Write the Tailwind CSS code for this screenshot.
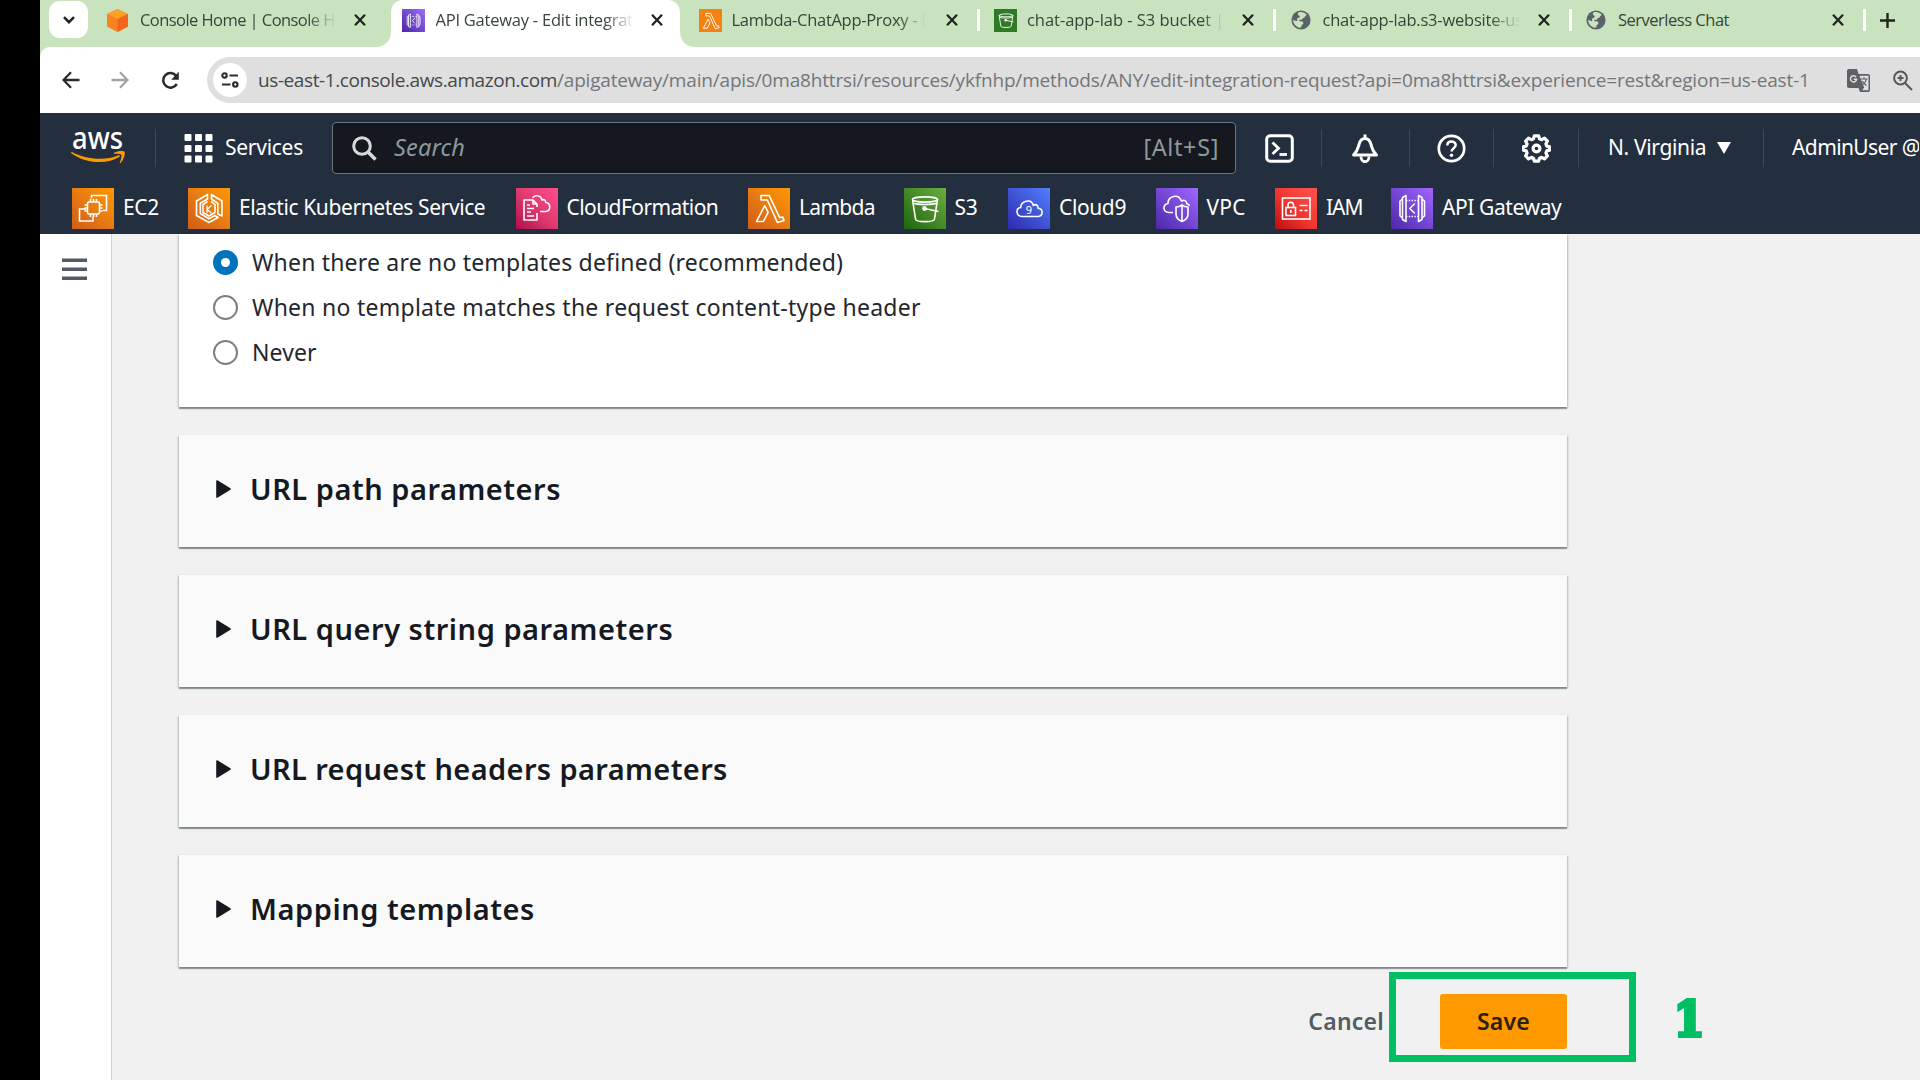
<!DOCTYPE html>
<html lang="en">
<head>
<meta charset="utf-8">
<title>API Gateway - Edit integration request</title>
<script src="https://cdn.jsdelivr.net/npm/@tailwindcss/browser@4"></script>
</head>
<body class="w-[1920px] h-[1080px] overflow-hidden bg-black pl-[40px] font-['Noto_Sans',sans-serif] text-[#16191f]">

<!-- Shared symbols -->
<svg class="hidden">
  <symbol id="x" viewBox="0 0 12 12"><path d="M1 .8l10 10.4M11 .8L1 11.2" stroke="#20261f" stroke-width="2.3" fill="none"/></symbol>
  <symbol id="globe" viewBox="0 0 20 20"><circle cx="10" cy="10" r="9.6" fill="#5c6268"/><path d="M8.3 2.1c2.6-.6 5.6.3 7.3 2.4-.3 1.500-1.400 1.200-1.900 2.400-.6 1.200-2.300.8-2.500 2.100-.2.9-1.500.8-2.400.8-.9.100-.7 1.300.1 1.400 1.400 0 3.300-.1 3.500 1.700.1 1.500-1.900 1.600-2 3.200-.1.900-.5 1.700-1.200 1.700C4.900 17 2.200 13.800 2.100 9.700c1.400.7 2.900 1.300 3.900 1.300.9-.3-.5-1.500.2-2.400.8-1 2.600-.8 2.600-2.200 0-1.200-1.900-.7-2-2.100 0-.9.6-1.900 1.500-2.200z" fill="#c9e3bf"/></symbol>
  <symbol id="lambda" viewBox="0 0 40 40"><path d="M12 7.500h8.200l10.600 22.300 2.800-.9 1.400 3.500-6.600 2.100L18.300 12H12zM15.800 17.500l3.300 6.800L14.400 33.500H7.500z" fill="none" stroke="#fff" stroke-width="1.600" stroke-linejoin="round"/></symbol>
  <symbol id="bucket" viewBox="0 0 40 40"><g fill="none" stroke="#fff" stroke-width="1.600"><ellipse cx="20" cy="11.500" rx="12.500" ry="2.600"/><path d="M7.500 11.500l3 19.500c.3 3.500 18.700 3.500 19 0l3-19.500M8 15c5 2 19 2 24 0"/><path d="M19.500 20.500l14 3"/></g><circle cx="19.500" cy="20.500" r="2.400" fill="#fff"/></symbol>
  <symbol id="apigw" viewBox="0 0 40 40"><g fill="none" stroke="#fff" stroke-width="1.600" stroke-linejoin="round"><path d="M14 7.500l-3.500 2v22l3.500 2zM10.500 11L8 13v15l2.500 2M26.500 7.500l3.500 2v22l-3.500 2zM30 11l2.500 2v15L30 30M22.800 15.500l-5 5 5 5"/><path d="M14 12.500h12.500M14 28.500h12.500" stroke-dasharray="1.400 1.400"/></g></symbol>
</svg>

<div class="flex h-full flex-col overflow-hidden">

  <!-- Browser tab strip -->
  <header class="flex h-[47px] shrink-0 bg-[#c9e3bf] font-['Open_Sans',sans-serif] text-[16.500px] text-[#38433a]">
    <div class="w-[55px] shrink-0 pl-[9px] pt-px">
      <div class="flex h-[37px] w-[39px] items-center justify-center rounded-[11px] bg-white">
        <svg width="12" height="8" viewBox="0 0 12 8"><path d="M1 1.200l5 5 5-5" fill="none" stroke="#222" stroke-width="2.600"/></svg>
      </div>
    </div>

    <div class="flex h-[40px] w-[295.500px] shrink-0 items-center pl-[12px]">
      <svg width="21" height="23" viewBox="0 0 21 23"><path d="M10.500 0L21 5v12.500L10.500 23 0 17.500V5z" fill="#f8821d"/><path d="M10.500 0L21 5l-10.500 5L0 5z" fill="#fba02b"/><path d="M10.500 10L21 5v12.500L10.500 23z" fill="#f1661c"/></svg>
      <span class="ml-[12px] w-[196px] overflow-hidden whitespace-nowrap tracking-[-0.560px] mask-r-from-85% mask-r-to-100%">Console Home | Console H</span>
      <svg class="ml-[18px]" width="12" height="12"><use href="#x"/></svg>
    </div>

    <div class="relative h-[47px] w-[296px] shrink-0">
      <svg class="absolute left-[-16px] top-0" width="326" height="47" viewBox="0 0 326 47"><path d="M0 47c10 0 16-6 16-16V13C16 5 21 0 28 0H293c7 0 12 5 12 13V31c0 10 6 16 16 16z" fill="#fff"/></svg>
      <div class="relative flex h-[40px] items-center pl-[11px]">
        <div class="flex size-[23px] items-center justify-center bg-linear-to-tr from-[#4d27aa] to-[#9b6df5]"><svg width="21" height="23"><use href="#apigw"/></svg></div>
        <span class="ml-[11px] w-[198px] overflow-hidden whitespace-nowrap tracking-[-0.230px] mask-r-from-85% mask-r-to-100%">API Gateway - Edit integrat</span>
        <svg class="ml-[17px]" width="12" height="12"><use href="#x"/></svg>
      </div>
    </div>

    <div class="flex h-[40px] w-[295.500px] shrink-0 items-center pl-[12px]">
      <div class="flex size-[23px] items-center justify-center bg-[#f58210]"><svg width="23" height="23"><use href="#lambda"/></svg></div>
      <span class="ml-[10px] w-[197px] overflow-hidden whitespace-nowrap tracking-[-0.300px] mask-r-from-85% mask-r-to-98%">Lambda-ChatApp-Proxy - L</span>
      <svg class="ml-[17px]" width="12" height="12"><use href="#x"/></svg>
      <div class="ml-[19px] h-[22px] w-[3px] bg-white"></div>
    </div>

    <div class="flex h-[40px] w-[295.500px] shrink-0 items-center pl-[12px]">
      <div class="flex size-[23px] items-center justify-center bg-[#2f7a24]"><svg width="22" height="22"><use href="#bucket"/></svg></div>
      <span class="ml-[10px] w-[196px] overflow-hidden whitespace-nowrap tracking-[-0.040px] mask-r-from-90% mask-r-to-100%">chat-app-lab - S3 bucket |</span>
      <svg class="ml-[19px]" width="12" height="12"><use href="#x"/></svg>
      <div class="ml-[19px] h-[22px] w-[3px] bg-white"></div>
    </div>

    <div class="flex h-[40px] w-[295.500px] shrink-0 items-center pl-[13px]">
      <svg width="20" height="20"><use href="#globe"/></svg>
      <span class="ml-[12px] w-[197px] overflow-hidden whitespace-nowrap tracking-[-0.220px] mask-r-from-85% mask-r-to-100%">chat-app-lab.s3-website-us</span>
      <svg class="ml-[18px]" width="12" height="12"><use href="#x"/></svg>
      <div class="ml-[19px] h-[22px] w-[3px] bg-white"></div>
    </div>

    <div class="flex h-[40px] w-[295.500px] shrink-0 items-center pl-[13px]">
      <svg width="20" height="20"><use href="#globe"/></svg>
      <span class="ml-[12px] w-[196px] whitespace-nowrap tracking-[-0.490px]">Serverless Chat</span>
      <svg class="ml-[18px]" width="12" height="12"><use href="#x"/></svg>
      <div class="ml-[19px] h-[22px] w-[3px] bg-white"></div>
    </div>

    <div class="flex h-[40px] items-center pl-[11px]">
      <svg width="15" height="15" viewBox="0 0 15 15"><path d="M7.500 0v15M0 7.500h15" stroke="#20261f" stroke-width="2.400"/></svg>
    </div>
  </header>

  <!-- Address bar -->
  <div class="h-[66px] shrink-0 bg-[#c9e3bf]">
    <div class="flex h-full items-center rounded-tl-[10px] bg-white pl-[22px]">
      <svg width="18" height="18" viewBox="0 0 18 18"><path d="M17.500 9H1.800M9 1.200L1.500 9 9 16.800" fill="none" stroke="#2a2a2a" stroke-width="2.300"/></svg>
      <svg class="ml-[31px]" width="18" height="18" viewBox="0 0 18 18"><path d="M.5 9h15.700M9 1.200L16.500 9 9 16.800" fill="none" stroke="#a3a3a3" stroke-width="2.300"/></svg>
      <svg class="ml-[32px]" width="19" height="19" viewBox="0 0 19 19"><path d="M15.800 13a7.300 7.300 0 1 1-.5-8.100" fill="none" stroke="#2a2a2a" stroke-width="2.500"/><path d="M17.800.8v8h-7.600z" fill="#2a2a2a"/></svg>
      <div class="ml-[27px] flex h-[46px] flex-1 items-center rounded-l-full bg-[#dfdfdf] pl-[6px]">
        <div class="flex size-[34px] shrink-0 items-center justify-center rounded-full bg-white">
          <svg width="18" height="16" viewBox="0 0 18 16"><g fill="none" stroke="#2d2d2d" stroke-width="2.100"><circle cx="3.500" cy="3.500" r="2.200"/><path d="M8.500 3.500H17M1 12.500h8.500"/><circle cx="14.300" cy="12.500" r="2.200"/></g></svg>
        </div>
        <div class="ml-[11px] w-[1589px] shrink-0 whitespace-nowrap pt-px font-['Open_Sans',sans-serif] text-[19px] text-[#73767a] tracking-[-0.180px]"><span class="text-[#45484c] tracking-[-0.410px]">us-east-1.console.aws.amazon.com</span>/apigateway/main/apis/0ma8httrsi/resources/ykfnhp/methods/ANY/edit-integration-request?api=0ma8httrsi&amp;experience=rest&amp;region=us-east-1</div>
        <svg class="mt-[2px] shrink-0" width="24" height="24" viewBox="0 0 24 24"><path d="M2 0h8l1.600 5H21c1.300 0 2 .7 2 2v14c0 1.300-.7 2-2 2h-8l-1.500-4H2c-1.300 0-2-.7-2-2V2C0 .7.700 0 2 0z" fill="#5d6166"/><path d="M12.400 6.800H21c.3 0 .5.200.5.500v13.500c0 .3-.2.500-.5.500h-5.800l2-2.800z" fill="#dfdfdf"/><path d="M13.500 10h7M17 8.300V10M19.300 10c-.5 3-2.300 5-4.300 6M15.300 12c.8 2 2.300 3.500 4.200 4.500" fill="none" stroke="#5d6166" stroke-width="1.200"/><path d="M9 8a3.100 3.100 0 1 0 .6 2.300H6.700" fill="none" stroke="#dfdfdf" stroke-width="1.400"/></svg>
        <svg class="ml-[22px] shrink-0" width="20" height="21" viewBox="0 0 20 21"><g fill="none" stroke="#55585c" stroke-width="2"><circle cx="7.500" cy="8" r="6.400"/><path d="M12 13l7 7M7.500 5v6M4.500 8h6"/></g></svg>
      </div>
    </div>
  </div>

  <!-- AWS console navigation -->
  <nav class="h-[121px] shrink-0 overflow-hidden bg-[#232f3e] text-[21px] text-white">
    <div class="flex h-[70px] items-center pl-[31px]">
      <svg class="mt-[1px] overflow-visible" width="55" height="38" viewBox="0 0 55 38"><text x="1" y="19" font-family="Noto Sans, sans-serif" font-size="30" font-weight="500" fill="#fff" textLength="51" lengthAdjust="spacingAndGlyphs">aws</text><path d="M0 23c13 10 35 12.500 49 3.500l-1-1.500C35 31 15 30 .6 21.800z" fill="#f90"/><path d="M43 22.800c4-2.300 9.500-2.200 10.600-1 .8 1.400-.6 8-4 11.200-.8.500-1.200.2-.8-.6 1-2.500 2.200-6.200 1.500-7.700-.6-1-4-.9-6.800-.9-.9 0-1-.6-.5-1z" fill="#f90"/></svg>
      <div class="ml-[29px] h-[38px] w-px bg-[#3c4856]"></div>
      <svg class="ml-[28px]" width="29" height="29" viewBox="0 0 29 29"><g fill="#fff"><rect x=".5" width="7" height="7" rx="1"/><rect x="11" width="7" height="7" rx="1"/><rect x="21.500" width="7" height="7" rx="1"/><rect x=".5" y="11" width="7" height="7" rx="1"/><rect x="11" y="11" width="7" height="7" rx="1"/><rect x="21.500" y="11" width="7" height="7" rx="1"/><rect x=".5" y="21.500" width="7" height="7" rx="1"/><rect x="11" y="21.500" width="7" height="7" rx="1"/><rect x="21.500" y="21.500" width="7" height="7" rx="1"/></g></svg>
      <span class="ml-[12px] w-[107px] shrink-0 tracking-[-0.270px]">Services</span>
      <div class="flex h-[52px] w-[904px] shrink-0 items-center rounded-[4px] border-[1.500px] border-[#6b747c] bg-[#15181f] pl-[19px] pr-[16px] text-[#8d999a]">
        <svg width="25" height="25" viewBox="0 0 25 25"><circle cx="10" cy="10" r="8.300" fill="none" stroke="#d5dbdb" stroke-width="3"/><path d="M16 16l7.500 7.500" stroke="#d5dbdb" stroke-width="3.600"/></svg>
        <span class="ml-[17px] text-[23.500px] italic tracking-[0.150px]">Search</span>
        <span class="ml-auto text-[23.500px] tracking-[0.600px]">[Alt+S]</span>
      </div>
      <svg class="ml-[29px]" width="29" height="29" viewBox="0 0 29 29"><rect x="1.700" y="1.700" width="25.600" height="25.600" rx="3.500" fill="none" stroke="#fff" stroke-width="3"/><path d="M7.500 8.500l6 5.700-6 5.700" fill="none" stroke="#fff" stroke-width="2.800"/><path d="M14.500 20.500h7.500" stroke="#fff" stroke-width="2.800"/></svg>
      <div class="ml-[27px] h-[38px] w-px bg-[#3c4856]"></div>
      <svg class="ml-[29px]" width="28" height="29" viewBox="0 0 28 29"><path d="M14 .500v3M2.500 21h23c-4.500-4.500-4.500-7-5.500-10.500C19 6.500 17 4.500 14 4.500s-5 2-6 6C7 14 7 16.500 2.500 21z" fill="none" stroke="#fff" stroke-width="3" stroke-linejoin="round"/><path d="M10 22.500c0 7 8 7 8 0" fill="none" stroke="#fff" stroke-width="2.800"/></svg>
      <div class="ml-[30px] h-[38px] w-px bg-[#3c4856]"></div>
      <svg class="ml-[27px]" width="29" height="29" viewBox="0 0 29 29"><circle cx="14.500" cy="14.500" r="12.700" fill="none" stroke="#fff" stroke-width="2.700"/><path d="M10.300 11.500c0-5.200 8.400-5.200 8.400-.4 0 3.200-4.200 3-4.200 6.400" fill="none" stroke="#fff" stroke-width="2.500"/><circle cx="14.500" cy="21.200" r="1.700" fill="#fff"/></svg>
      <div class="ml-[27px] h-[38px] w-px bg-[#3c4856]"></div>
      <svg class="ml-[28px]" width="29" height="29" viewBox="0 0 29 29"><path d="M12.300 1.800h4.400l.8 3 2.200.9 2.800-1.500 2.900 2.900-1.500 2.800.9 2.200 2.900.8v3.200l-2.900.8-.9 2.200 1.500 2.800-2.900 2.900-2.800-1.500-2.200.9-.8 3h-4.400l-.8-3-2.200-.9-2.800 1.500-2.900-2.900 1.500-2.800-.9-2.200-2.900-.8v-3.200l2.900-.8.9-2.200-1.500-2.800 2.900-2.900 2.800 1.500 2.200-.9z" fill="none" stroke="#fff" stroke-width="3.200" stroke-linejoin="round"/><circle cx="14.500" cy="14.500" r="3.400" fill="none" stroke="#fff" stroke-width="3.200"/></svg>
      <div class="ml-[27px] h-[38px] w-px bg-[#3c4856]"></div>
      <span class="ml-[29px] w-[98px] shrink-0 whitespace-nowrap tracking-[-0.350px]">N. Virginia</span>
      <svg class="ml-[11px]" width="14" height="12"><path d="M0 0h14L7 12z" fill="#fff"/></svg>
      <div class="ml-[32px] h-[38px] w-px bg-[#3c4856]"></div>
      <span class="ml-[28px] w-[127px] shrink-0 overflow-hidden whitespace-nowrap tracking-[-0.600px]">AdminUser @</span>
    </div>

    <div class="flex h-[50px] items-center whitespace-nowrap pl-[32px] [&_svg]:size-[40px]">
      <div class="flex w-[116px] shrink-0 items-center gap-[9px]">
        <div class="flex h-[41px] w-[42px] items-center justify-center bg-linear-to-tr from-[#d05c17] to-[#f90]"><svg viewBox="0 0 40 40"><g fill="none" stroke="#fff" stroke-width="1.600"><rect x="14.500" y="14" width="12" height="12" rx="1.500"/><path d="M17.500 14v-3M20.500 14v-3M23.500 14v-3M17.500 29v-3M20.500 29v-3M23.500 29v-3M14.500 17h-3M14.500 20h-3M14.500 23h-3M29.500 17h-3M29.500 20h-3M29.500 23h-3M18.500 10.500V7.500H33.500v15H30M13 21H6.500v12H20v-4"/></g></svg></div>
        <span class="tracking-[-0.400px]">EC2</span>
      </div>
      <div class="flex w-[327.500px] shrink-0 items-center gap-[9px]">
        <div class="flex h-[41px] w-[42px] items-center justify-center bg-linear-to-tr from-[#d05c17] to-[#f90]"><svg viewBox="0 0 40 40"><g fill="none" stroke="#fff" stroke-width="1.600" stroke-linejoin="round"><path d="M18.500 6.500L7.500 13v14.500L20 34.500l9-5-3-2-6 3.300-8.700-5.300V15.300l7.200-4.300zM22.500 6.500v4.500l6.300 4.300V26l4.200 2V13z"/><path d="M18.500 13.500l-4.500 3v8l6 3.500 6-3.500v-8l-4-3"/><path d="M18 17.500v7.500M22.500 17.500L18 21.500l4.500 3.500" stroke-width="1.200"/></g></svg></div>
        <span class="tracking-[-0.400px]">Elastic Kubernetes Service</span>
      </div>
      <div class="flex w-[232.500px] shrink-0 items-center gap-[9px]">
        <div class="flex h-[41px] w-[42px] items-center justify-center bg-linear-to-tr from-[#b0084d] via-[#e03a70] to-[#ff4f8b]"><svg viewBox="0 0 40 40"><g fill="none" stroke="#fff" stroke-width="1.600" stroke-linejoin="round"><path d="M20 25v7H7V12h9l4 4v3M16 12v4h4M10 17h3M10 20.500h7M10 24h4M10 28h7"/><path d="M15.500 10c1.500-3 8-3.500 9.500 2 2-1 3.500 0 3.800 2.500 5 .5 5.500 8.500 0 9H23"/></g></svg></div>
        <span class="tracking-[-0.570px]">CloudFormation</span>
      </div>
      <div class="flex w-[155.500px] shrink-0 items-center gap-[9px]">
        <div class="flex h-[41px] w-[42px] items-center justify-center bg-linear-to-tr from-[#d05c17] to-[#f90]"><svg><use href="#lambda"/></svg></div>
        <span class="tracking-[-0.700px]">Lambda</span>
      </div>
      <div class="flex w-[104.500px] shrink-0 items-center gap-[9px]">
        <div class="flex h-[41px] w-[42px] items-center justify-center bg-linear-to-tr from-[#1b660f] to-[#6cae3e]"><svg><use href="#bucket"/></svg></div>
        <span class="tracking-[-0.200px]">S3</span>
      </div>
      <div class="flex w-[147.500px] shrink-0 items-center gap-[9px]">
        <div class="flex h-[41px] w-[42px] items-center justify-center bg-linear-to-tr from-[#2e27ad] to-[#527fff]"><svg viewBox="0 0 40 40"><path d="M13 28.500c-6.500-.5-6.300-8.500-1.300-9 0-6.500 10.500-9.500 12.600-2.300 2.500-1.500 4.700 0 4.900 3 5.500.8 5 8-.2 8.300z" fill="none" stroke="#fff" stroke-width="1.600"/><text x="20" y="26" font-size="11" font-family="Noto Sans, sans-serif" fill="#fff" text-anchor="middle">9</text></svg></div>
        <span class="tracking-[-0.380px]">Cloud9</span>
      </div>
      <div class="flex w-[119.500px] shrink-0 items-center gap-[9px]">
        <div class="flex h-[41px] w-[42px] items-center justify-center bg-linear-to-tr from-[#4d27aa] to-[#a166ff]"><svg viewBox="0 0 40 40"><g fill="none" stroke="#fff" stroke-width="1.600" stroke-linejoin="round"><path d="M16 24.500h-4c-6.500-.5-6.500-8-1-9C11 7.500 21.500 5.500 24.500 13c2.500-1.500 5-.3 5.200 2.500l3 2"/><path d="M25 17c2 1.500 4 2 6 2v7c0 3.500-2 6-6 7.500-4-1.500-6-4-6-7.500v-7c2 0 4-.5 6-2zM25 17v16.500"/></g></svg></div>
        <span class="tracking-[0.200px]">VPC</span>
      </div>
      <div class="flex w-[116px] shrink-0 items-center gap-[9px]">
        <div class="flex h-[41px] w-[42px] items-center justify-center bg-linear-to-tr from-[#bd0816] via-[#f2382f] to-[#ff5252]"><svg viewBox="0 0 40 40"><g fill="none" stroke="#fff" stroke-width="1.600"><rect x="6.500" y="10" width="27.500" height="21"/><rect x="10" y="19.500" width="9.500" height="8"/><path d="M12 19.500v-2.500c0-3.700 5.500-3.700 5.500 0v2.500M14.800 22v3M23.500 17.500h8M23.500 22.500h3M28.500 22.500h3"/></g></svg></div>
        <span class="tracking-[-1px]">IAM</span>
      </div>
      <div class="flex shrink-0 items-center gap-[9px]">
        <div class="flex h-[41px] w-[42px] items-center justify-center bg-linear-to-tr from-[#4d27aa] to-[#a166ff]"><svg><use href="#apigw"/></svg></div>
        <span class="tracking-[-0.400px]">API Gateway</span>
      </div>
    </div>
  </nav>

  <!-- Page body -->
  <div class="flex min-h-0 flex-1 bg-[#f1f1f1]">
    <aside class="w-[72px] shrink-0 border-r-[1.500px] border-[#d2d4d4] bg-white pl-[22px] pt-[24px]">
      <svg width="25" height="23" viewBox="0 0 25 23"><path d="M0 2.300h25M0 11.300h25M0 20.300h25" stroke="#545b64" stroke-width="3.600"/></svg>
    </aside>
    <main class="ml-[67px] w-[1388px] shrink-0">
      <section class="h-[173px] bg-white pl-[34px] pt-[6px] text-[23px] text-[#23272d] shadow-[0_2px_1px_rgba(0,20,26,0.300),1px_1px_2px_rgba(0,28,36,0.200),-1px_1px_2px_rgba(0,28,36,0.200)]">
        <div class="flex h-[45px] items-center gap-[14px]">
          <div class="flex size-[25px] items-center justify-center rounded-full bg-[#0073bb]"><div class="size-[9px] rounded-full bg-white"></div></div>
          <span class="tracking-[0.190px]">When there are no templates defined (recommended)</span>
        </div>
        <div class="flex h-[45px] items-center gap-[14px]">
          <div class="size-[25px] rounded-full border-2 border-[#7b7f82]"></div>
          <span class="tracking-[0.260px]">When no template matches the request content-type header</span>
        </div>
        <div class="flex h-[45px] items-center gap-[14px]">
          <div class="size-[25px] rounded-full border-2 border-[#7b7f82]"></div>
          <span class="tracking-[0.100px]">Never</span>
        </div>
      </section>

      <div class="mt-[28px] flex flex-col gap-[28px] text-[29px] font-semibold">
        <section class="flex h-[112px] items-center gap-[19px] bg-[#fafafa] pb-[4px] pl-[37px] shadow-[0_2px_1px_rgba(0,28,36,0.300),1px_1px_2px_rgba(0,28,36,0.200),-1px_1px_2px_rgba(0,28,36,0.200)]">
          <svg width="15" height="18" viewBox="0 0 15 18"><path d="M1 1l13 8L1 17z" fill="#16191f" stroke="#16191f" stroke-width="1.600" stroke-linejoin="round"/></svg><h2 class="tracking-[0.520px]">URL path parameters</h2>
        </section>
        <section class="flex h-[112px] items-center gap-[19px] bg-[#fafafa] pb-[4px] pl-[37px] shadow-[0_2px_1px_rgba(0,28,36,0.300),1px_1px_2px_rgba(0,28,36,0.200),-1px_1px_2px_rgba(0,28,36,0.200)]">
          <svg width="15" height="18" viewBox="0 0 15 18"><path d="M1 1l13 8L1 17z" fill="#16191f" stroke="#16191f" stroke-width="1.600" stroke-linejoin="round"/></svg><h2 class="tracking-[0.530px]">URL query string parameters</h2>
        </section>
        <section class="flex h-[112px] items-center gap-[19px] bg-[#fafafa] pb-[4px] pl-[37px] shadow-[0_2px_1px_rgba(0,28,36,0.300),1px_1px_2px_rgba(0,28,36,0.200),-1px_1px_2px_rgba(0,28,36,0.200)]">
          <svg width="15" height="18" viewBox="0 0 15 18"><path d="M1 1l13 8L1 17z" fill="#16191f" stroke="#16191f" stroke-width="1.600" stroke-linejoin="round"/></svg><h2 class="tracking-[0.380px]">URL request headers parameters</h2>
        </section>
        <section class="flex h-[112px] items-center gap-[19px] bg-[#fafafa] pb-[4px] pl-[37px] shadow-[0_2px_1px_rgba(0,28,36,0.300),1px_1px_2px_rgba(0,28,36,0.200),-1px_1px_2px_rgba(0,28,36,0.200)]">
          <svg width="15" height="18" viewBox="0 0 15 18"><path d="M1 1l13 8L1 17z" fill="#16191f" stroke="#16191f" stroke-width="1.600" stroke-linejoin="round"/></svg><h2 class="tracking-[0.550px]">Mapping templates</h2>
        </section>
      </div>

      <div class="mt-[27px] flex h-[55px] items-center justify-end text-[23px] font-semibold">
        <span class="mr-[56px] tracking-[0.230px] text-[#545b64]">Cancel</span>
        <div class="flex h-[55px] w-[127px] items-center justify-center rounded-[3px] bg-[#ff9900] tracking-[0.210px] text-[#2b2008]">Save</div>
      </div>
    </main>
  </div>
</div>

<!-- Step highlight laid over the Save button -->
<div class="absolute left-[1389px] top-[972px] h-[90px] w-[247px] border-[7px] border-[#00bf63]"></div>
<div class="absolute left-[1672px] top-[987px] origin-center scale-x-90 font-['DejaVu_Serif',serif] text-[49px] leading-[64px] font-bold text-[#00bf63] [-webkit-text-stroke:4px_#00bf63]">1</div>
</body>
</html>
